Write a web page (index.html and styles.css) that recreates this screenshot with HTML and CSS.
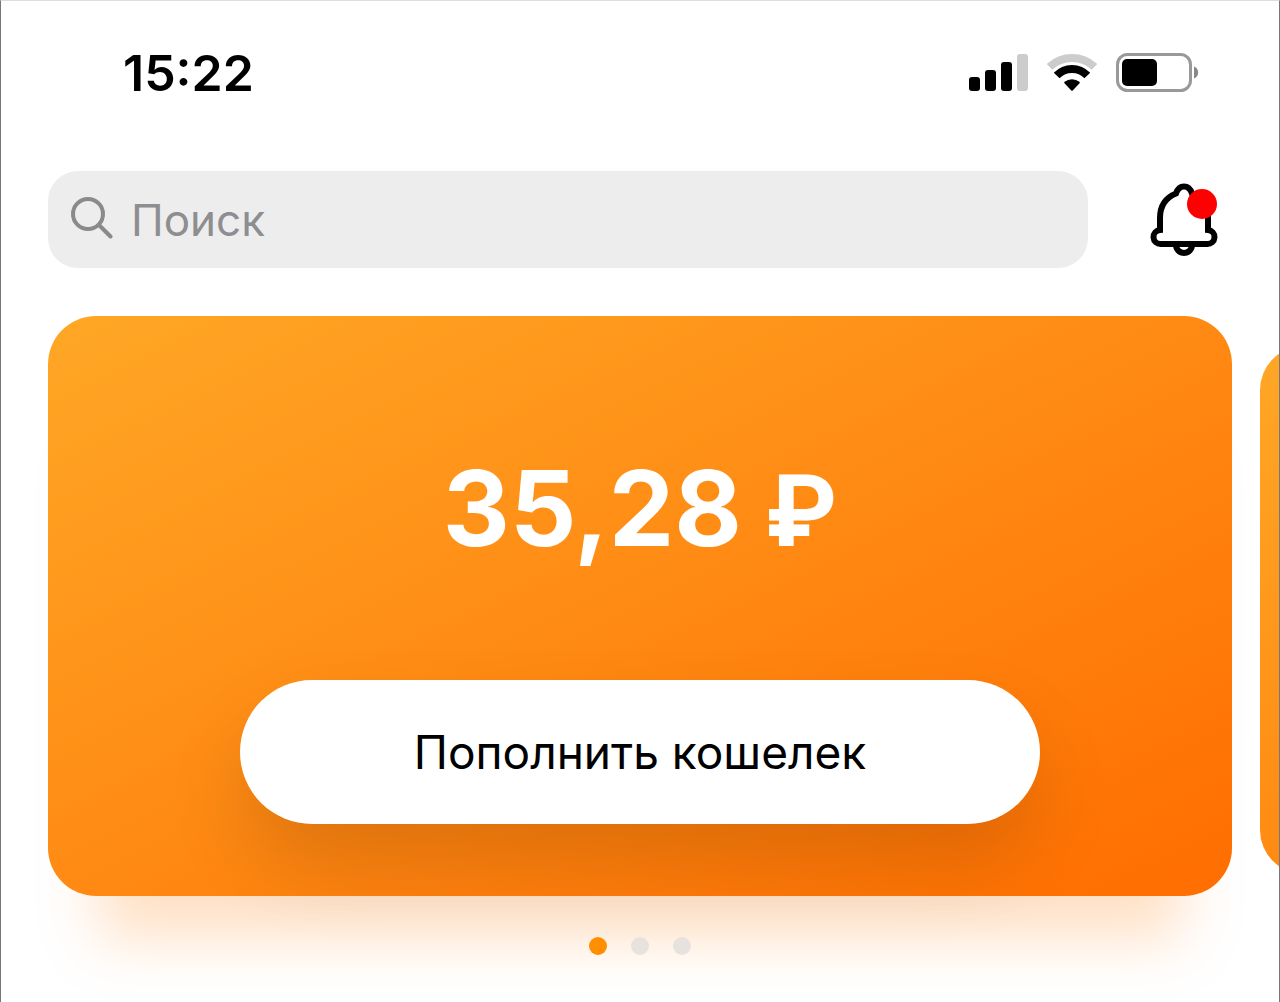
FILE: index.html
```html
<!DOCTYPE html>
<html lang="ru">
<head>
    <meta charset="UTF-8">
    <meta name="viewport" content="width=device-width, initial-scale=1.0">
    <title>Кошелек</title>
    <link rel="stylesheet" href="styles.css">
</head>
<body>
    <div class="app">
        <!-- Status bar -->
        <header class="status-bar">
            <time class="clock">15:22</time>
            <div class="status-icons">
                <svg width="59" height="38" viewBox="0 0 59 38" aria-hidden="true">
                    <rect x="0" y="23" width="11" height="14" rx="3"/>
                    <rect x="16" y="16" width="11" height="21" rx="3"/>
                    <rect x="32" y="8" width="11" height="29" rx="3"/>
                    <rect x="48" y="0" width="11" height="37" rx="3" fill="#ccc"/>
                </svg>
                <svg width="50" height="38" viewBox="0 0 50 38" fill="none" stroke="#000" stroke-width="8" aria-hidden="true">
                    <path d="M2.5 12.9A33 33 0 0 1 47.5 12.9" stroke="#ccc"/>
                    <path d="M9.7 21.6A21 21 0 0 1 40.3 21.6"/>
                    <path d="M18.2 28.6A11 11 0 0 1 31.8 28.6L25 35.8Z" fill="#000" stroke-width="2" stroke-linejoin="round"/>
                </svg>
                <svg width="83" height="40" viewBox="0 0 83 40" aria-hidden="true">
                    <rect x="1.5" y="1.5" width="73" height="36" rx="10" fill="none" stroke="#999" stroke-width="3"/>
                    <rect x="6" y="6" width="35" height="27" rx="5"/>
                    <path d="M78 13.5C83.5 15 83.5 24 78 25.5Z" fill="#888"/>
                </svg>
            </div>
        </header>

        <!-- Search -->
        <div class="toolbar">
            <label class="search">
                <svg width="42" height="46" viewBox="0 0 42 46" fill="none" stroke="#8a8a8c" stroke-width="4" stroke-linecap="round" aria-hidden="true">
                    <circle cx="17" cy="17" r="15"/>
                    <path d="M28 28L39.5 39.5"/>
                </svg>
                <input type="search" placeholder="Поиск" aria-label="Поиск">
            </label>
            <button class="bell" type="button" aria-label="Уведомления">
                <svg width="68" height="74" viewBox="0 0 68 74" fill="none" stroke="#000" stroke-width="6" aria-hidden="true">
                    <path d="M26 62a8 8 0 0 0 16 0"/>
                    <path d="M10 47V35C10 24 15 15 26 10.5C27.5 6 30 3.5 34 3.5S40.500 6 42 10.5C53 15 58 24 58 35V47a7 7 0 0 1-1 14H11a7 7 0 0 1-1-14Z"/>
                    <circle cx="52" cy="21" r="15" fill="#f00" stroke="none"/>
                </svg>
            </button>
        </div>

        <!-- Wallet cards -->
        <main class="cards">
            <section class="card">
                <p class="balance">35,28 <span class="currency">₽</span></p>
                <button class="top-up" type="button">Пополнить кошелек</button>
            </section>
            <section class="card card-next"></section>
        </main>

        <div class="dots">
            <span class="dot active"></span>
            <span class="dot"></span>
            <span class="dot"></span>
        </div>
    </div>
</body>
</html>
```
FILE: styles.css
```css
* {
    box-sizing: border-box;
}

body {
    margin: 0;
    font-family: Inter, "Liberation Sans", sans-serif;
    background-color: #fff;
    color: #000;
}

.app {
    min-height: 100vh;
    padding: 0 47px;
    overflow: hidden;
    border: 1px solid #777;
    border-top-color: #ddd;
    border-bottom: none;
}

/* Status bar */
.status-bar {
    display: flex;
    justify-content: space-between;
    align-items: center;
    padding: 42px 33px 42px 75px;
}

.clock {
    font-size: 50px;
    line-height: 60px;
    font-weight: 600;
}

.status-icons {
    display: flex;
    align-items: center;
    gap: 19px;
}

/* Search row */
.toolbar {
    display: flex;
    align-items: center;
    gap: 62px;
    margin-top: 26px;
    padding-right: 14px;
}

.search {
    flex: 1;
    display: flex;
    align-items: center;
    gap: 18px;
    height: 97px;
    padding: 0 23px;
    border-radius: 30px;
    background-color: #ededed;
}

.search input {
    flex: 1;
    min-width: 0;
    padding: 0;
    border: none;
    outline: none;
    background: none;
    font-family: inherit;
    font-size: 44px;
}

.search input::placeholder {
    color: #8e8e90;
}

.bell {
    display: flex;
    padding: 0;
    border: none;
    background: none;
    cursor: pointer;
}

/* Cards */
.cards {
    display: flex;
    align-items: center;
    gap: 28px;
    margin-top: 48px;
}

.card {
    flex: 0 0 100%;
    display: flex;
    flex-direction: column;
    align-items: center;
    height: 580px;
    padding-top: 128px;
    border-radius: 48px;
    background: linear-gradient(to bottom right, #ffa726, #ff6d00);
    box-shadow: 0 92px 56px -50px rgba(255, 130, 20, 0.25);
}

.card-next {
    height: 528px;
    margin-top: 8px;
    border-radius: 44px;
    box-shadow: none;
}

.balance {
    margin: 0;
    font-size: 104px;
    line-height: 128px;
    font-weight: 700;
    color: #fff;
}

.currency {
    font-family: Roboto, sans-serif;
    font-size: 100px;
    line-height: 1;
}

.top-up {
    width: 100%;
    max-width: 800px;
    height: 144px;
    margin-top: 108px;
    border: none;
    border-radius: 72px;
    background-color: #fff;
    color: #000;
    font-family: inherit;
    font-size: 46px;
    box-shadow: 0 42px 84px -4px rgba(0, 0, 0, 0.14);
    cursor: pointer;
}

/* Page dots */
.dots {
    position: relative;
    display: flex;
    justify-content: center;
    gap: 24px;
    margin-top: 41px;
}

.dot {
    width: 18px;
    height: 18px;
    border-radius: 50%;
    background-color: #e8e2df;
}

.dot.active {
    background-color: #ff8f00;
}
```
